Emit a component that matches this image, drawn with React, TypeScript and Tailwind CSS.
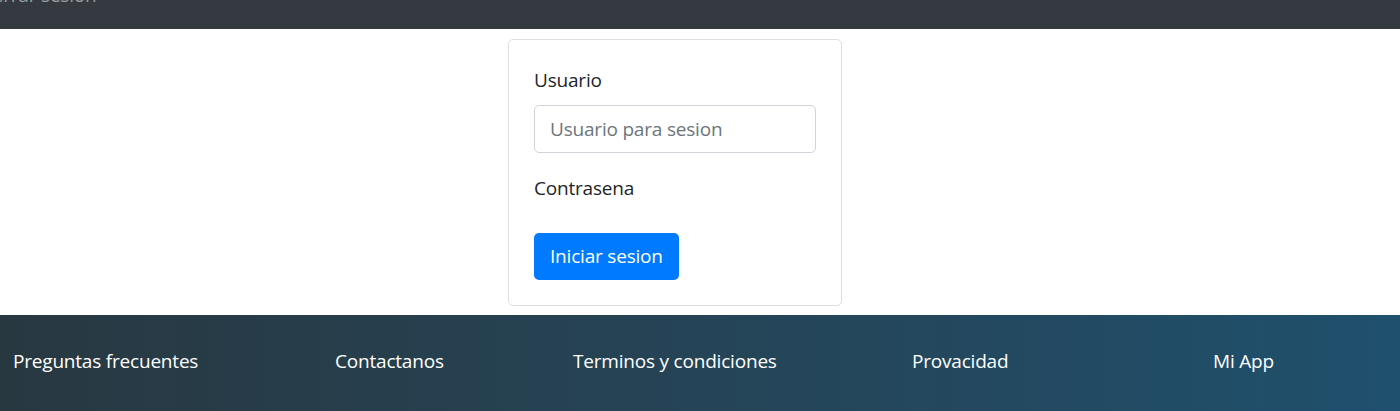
import React from "react";

export default function App() {
  return (
    <div className="bg-white min-h-[411px] text-[19px] tracking-[-0.2px] leading-[30px] text-[#212529] font-['Open_Sans','Noto_Sans',sans-serif]">
      <nav className="h-[29px] bg-[#343a40] overflow-hidden">
        <div className="-mt-[20px] -ml-[19px] text-[#9a9da0] whitespace-nowrap">Cerrar sesion</div>
      </nav>
      <div className="flex pl-[508px] pt-[10px] pb-[9px]">
        <div className="w-[334px] border border-[#dfdfdf] rounded-[5px] bg-white p-[25px] flex flex-col items-start">
          <label className="block mb-[10px]">Usuario</label>
          <input
            className="block w-full h-[47.5px] px-[15px] py-[7.5px] mb-[20px] border border-[#ced4da] rounded-[5px] text-[19px] tracking-[-0.2px] leading-[30px] placeholder:text-[#6c757d] outline-none"
            placeholder="Usuario para sesion"
          />
          <label className="block mb-[30px]">Contrasena</label>
          <button className="h-[47.5px] px-[16px] rounded-[5px] bg-[#007bff] text-white leading-[30px]">Iniciar sesion</button>
        </div>
      </div>
      <footer className="h-[96px] pt-[31px] bg-gradient-to-r from-[#283841] to-[#1f506d] text-white">
        <div className="flex pl-[13px] whitespace-nowrap">
          <div className="w-[322px]">Preguntas frecuentes</div>
          <div className="w-[238px]">Contactanos</div>
          <div className="w-[339px]">Terminos y condiciones</div>
          <div className="w-[301px]">Provacidad</div>
          <div>Mi App</div>
        </div>
      </footer>
    </div>
  );
}
